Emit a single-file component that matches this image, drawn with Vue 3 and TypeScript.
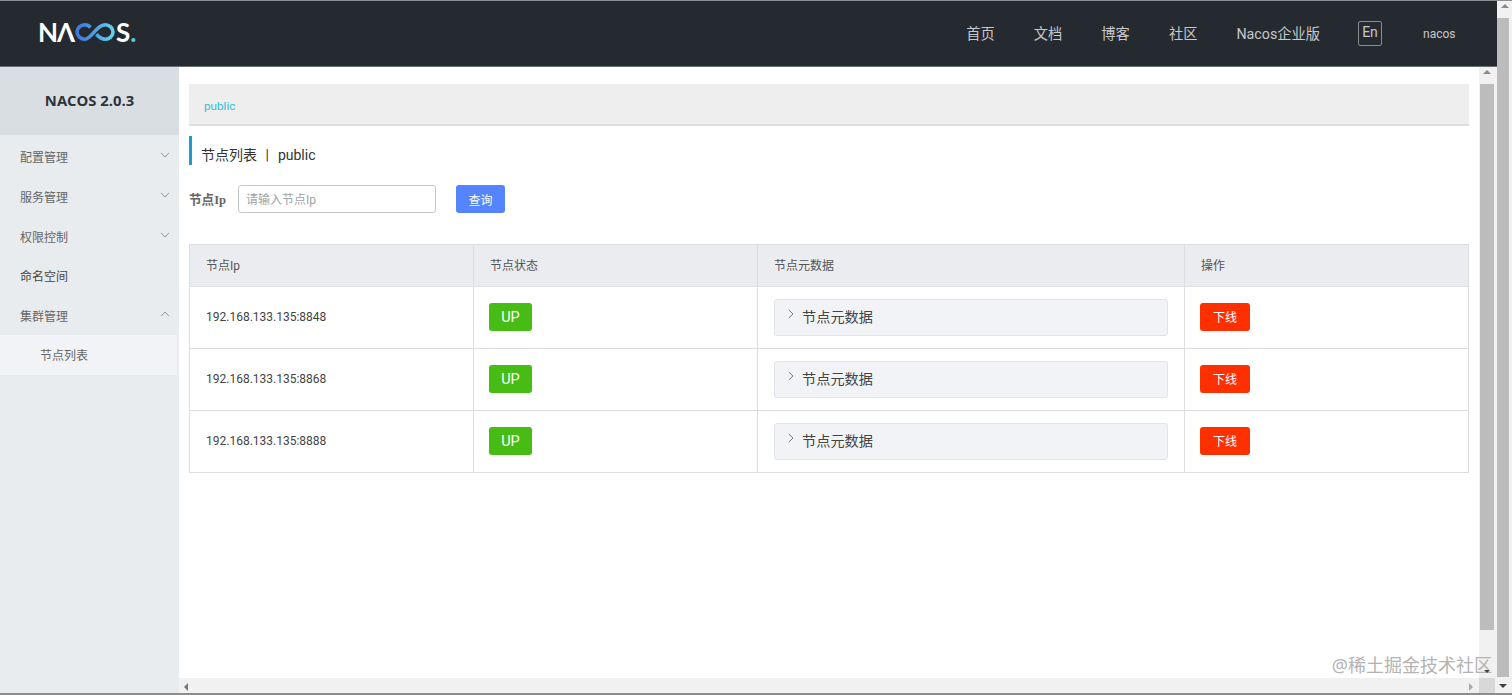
<script setup lang="ts">
const navLinks = ['首页', '文档', '博客', '社区', 'Nacos企业版']

const menu = [
  { label: '配置管理', arrow: 'down' },
  { label: '服务管理', arrow: 'down' },
  { label: '权限控制', arrow: 'down' },
  { label: '命名空间', arrow: '', dark: true },
  { label: '集群管理', arrow: 'up' },
]

const columns = ['节点Ip', '节点状态', '节点元数据', '操作']
const nodes = ['192.168.133.135:8848', '192.168.133.135:8868', '192.168.133.135:8888']
</script>

<template>
  <div class="screen">
    <div class="page">
      <header class="topbar">
        <div class="logo" aria-label="NACOS">
          <span>N</span><span class="logo-a">Λ</span>
          <svg class="logo-loop" width="40" height="18" viewBox="0 0 40 18" fill="none">
            <defs>
              <linearGradient id="loop" x1="0" y1="0" x2="1" y2="0">
                <stop offset="0" stop-color="#3a78e0" />
                <stop offset="0.5" stop-color="#4aa0e8" />
                <stop offset="1" stop-color="#62d2ea" />
              </linearGradient>
            </defs>
            <path
              d="M15.500 4.500C13.900 2.700 11.900 1.800 9.800 1.800 5.600 1.800 2 5 2 9s3.600 7.200 7.800 7.200c7 0 11.400-14.400 20.400-14.400C34.400 1.800 38 5 38 9s-3.600 7.200-7.800 7.200c-3.600 0-6.400-2.300-8.800-5"
              stroke="url(#loop)"
              stroke-width="3.600"
            />
          </svg>
          <span class="logo-s">S</span><span class="logo-dot">.</span>
        </div>
        <nav class="nav">
          <a v-for="link in navLinks" :key="link">{{ link }}</a>
        </nav>
        <span class="lang">En</span>
        <span class="user">nacos</span>
      </header>

      <div class="body">
        <aside class="sidebar">
          <div class="version">NACOS 2.0.3</div>
          <ul class="menu">
            <li v-for="item in menu" :key="item.label" class="menu-item" :class="{ dark: item.dark }">
              {{ item.label }}
              <svg v-if="item.arrow" class="chevron" :class="{ up: item.arrow === 'up' }" width="10" height="6" viewBox="0 0 10 6" fill="none">
                <path d="M1 .8 5 5 9 .8" stroke="#8f979f" />
              </svg>
            </li>
            <li class="submenu-item">节点列表</li>
          </ul>
        </aside>

        <div class="main-wrap">
          <div class="main-row">
            <main class="main">
              <div class="namespace"><a>public</a></div>
              <h1 class="page-title">节点列表<span class="sep">|</span>public</h1>

              <form class="search" @submit.prevent>
                <label class="search-label">节点Ip</label>
                <input class="search-input" type="text" placeholder="请输入节点Ip" />
                <button class="btn btn-query" type="button">查询</button>
              </form>

              <table class="table">
                <colgroup>
                  <col class="col-ip" />
                  <col class="col-state" />
                  <col class="col-meta" />
                  <col />
                </colgroup>
                <thead>
                  <tr>
                    <th v-for="col in columns" :key="col">{{ col }}</th>
                  </tr>
                </thead>
                <tbody>
                  <tr v-for="node in nodes" :key="node">
                    <td class="cell-shift">{{ node }}</td>
                    <td class="cell-shift"><span class="badge">UP</span></td>
                    <td>
                      <div class="collapse">
                        <svg width="6" height="10" viewBox="0 0 6 10" fill="none">
                          <path d="M.8 1 5 5 .8 9" stroke="#777" />
                        </svg>
                        <span>节点元数据</span>
                      </div>
                    </td>
                    <td class="cell-shift"><button class="btn btn-offline" type="button">下线</button></td>
                  </tr>
                </tbody>
              </table>
            </main>

            <div class="vscroll inner">
              <i class="arrow arrow-up"></i>
              <div class="thumb"></div>
            </div>
          </div>

          <div class="hscroll">
            <i class="arrow arrow-left"></i>
            <i class="arrow arrow-right"></i>
            <span class="corner"></span>
          </div>
        </div>
      </div>
    </div>

    <div class="vscroll outer">
      <i class="arrow arrow-up"></i>
      <div class="thumb"></div>
      <i class="arrow arrow-down"></i>
    </div>

    <div class="watermark">@稀土掘金技术社区</div>
    <i class="arrow arrow-small"></i>
  </div>
</template>

<style>
html,
body {
  height: 100%;
  margin: 0;
  overflow: hidden;
  background: #fff;
}
</style>

<style scoped>
.screen {
  position: relative;
  display: flex;
  height: 695px;
  box-sizing: border-box;
  border-top: 1px solid #8b8e91;
  border-bottom: 2px solid #8d8d8d;
  font-family: Roboto, 'Noto Sans CJK SC', sans-serif;
  color: #333;
  overflow: hidden;
}

.page {
  display: flex;
  flex-direction: column;
  width: 1497px;
}

.topbar {
  display: flex;
  align-items: center;
  flex: none;
  height: 65px;
  padding-left: 39px;
  background: #252a31;
  border-bottom: 1px solid #6b6f73;
}

.logo {
  display: flex;
  align-items: center;
  width: 97px;
  margin: -3px 0 0 -1px;
  font-family: Lato, sans-serif;
  font-size: 26px;
  font-weight: 700;
  line-height: 1;
  color: #fff;
}

.logo-a {
  margin-left: -1px;
}

.logo-loop {
  flex: none;
}

.logo-s {
  margin-left: 1px;
}

.logo-dot {
  color: #4ad0df;
}

.nav {
  display: flex;
  gap: 39px;
  margin-left: auto;
  margin-top: -2px;
  font-size: 14.250px;
  color: #c6c8ca;
}

.lang {
  width: 22px;
  height: 23px;
  margin-left: 38px;
  border: 1px solid #8a8d90;
  border-radius: 2px;
  font-size: 14px;
  line-height: 20px;
  text-align: center;
  color: #c6c8ca;
}

.user {
  width: 33px;
  margin: 0 41px 0 41px;
  font-size: 12px;
  color: #c6c8ca;
}

.body {
  display: flex;
  flex: 1;
  min-height: 0;
}

.sidebar {
  flex: none;
  width: 179px;
  background: #e9ecef;
}

.version {
  height: 68px;
  background: #d9dee2;
  font-family: 'Open Sans', sans-serif;
  font-size: 14.800px;
  font-weight: 700;
  line-height: 67px;
  text-align: center;
  color: #2b333b;
}

.menu {
  margin: 0;
  padding: 3.300px 0 0;
  list-style: none;
}

.menu-item {
  position: relative;
  height: 39.700px;
  padding-left: 20px;
  font-size: 12px;
  line-height: 41.500px;
  color: #666;
}

.menu-item.dark {
  color: #444;
}

.chevron {
  position: absolute;
  top: 14px;
  right: 9px;
}

.chevron.up {
  transform: rotate(180deg);
}

.submenu-item {
  width: 177px;
  height: 40px;
  margin-top: -2px;
  padding-left: 40px;
  box-sizing: border-box;
  background: #f1f3f6;
  font-size: 12px;
  line-height: 43px;
  color: #666;
}

.main-wrap {
  display: flex;
  flex: 1;
  flex-direction: column;
  min-width: 0;
}

.main-row {
  display: flex;
  flex: 1;
  min-height: 0;
}

.main {
  flex: 1;
  min-width: 0;
  padding: 17px 10px 0;
}

.namespace {
  height: 40px;
  padding-left: 15px;
  background: #eee;
  border-bottom: 2px solid #ddd;
  font-size: 11.700px;
  line-height: 44px;
  color: #36bcd6;
}

.page-title {
  height: 29px;
  margin: 10px 0 0;
  padding-left: 9px;
  border-left: 3px solid #209bc7;
  font-size: 14px;
  font-weight: 400;
  line-height: 38px;
  color: #333;
}

.sep {
  margin: 0 9px 0 8.500px;
}

.search {
  display: flex;
  align-items: center;
  height: 28px;
  margin-top: 20px;
}

.search-label {
  width: 49px;
  margin-top: -2px;
  font-family: 'Liberation Serif', 'Noto Sans CJK SC', serif;
  font-size: 12.600px;
  font-weight: 700;
  color: #666;
}

.search-input {
  width: 198px;
  height: 28px;
  padding: 2px 7px 0;
  box-sizing: border-box;
  border: 1px solid #c4c6cf;
  border-radius: 3px;
  outline: none;
  font-family: inherit;
  font-size: 12px;
}

.search-input::placeholder {
  color: #a0a3a8;
}

.btn {
  height: 28px;
  padding: 0;
  border: 0;
  border-radius: 3px;
  font-family: inherit;
  font-size: 12px;
  color: #fff;
}

.btn-query {
  width: 49px;
  margin-left: 20px;
  background: #5584ff;
}

.btn-offline {
  display: block;
  width: 50px;
  margin-left: -1px;
  background: #ff3000;
}

.table {
  width: 1280px;
  margin-top: 31px;
  table-layout: fixed;
  border-collapse: collapse;
  font-size: 12px;
}

.col-ip,
.col-state {
  width: 284px;
}

.col-meta {
  width: 427px;
}

.table th,
.table td {
  padding: 0 16px;
  border: 1px solid #dcdee3;
  text-align: left;
}

.table th {
  height: 42px;
  padding-bottom: 2px;
  box-sizing: border-box;
  background: #ebecf0;
  font-weight: 400;
  color: #555;
}

.table td {
  height: 61px;
  color: #444;
}

.table td.cell-shift {
  padding-bottom: 2px;
  box-sizing: border-box;
  height: 62px;
}

.badge {
  display: block;
  width: 43px;
  height: 28px;
  margin-left: -1px;
  border-radius: 3px;
  background: #46bc15;
  font-size: 14.500px;
  line-height: 30px;
  text-align: center;
  color: #fff;
}

.collapse {
  display: flex;
  align-items: center;
  gap: 8px;
  height: 37px;
  padding: 0 0 4px 13px;
  box-sizing: border-box;
  border: 1px solid #e2e4e9;
  border-radius: 3px;
  background: #f2f3f7;
  font-size: 14.200px;
  color: #444;
}

.collapse svg {
  margin-top: -3px;
}

.vscroll {
  position: relative;
  flex: none;
  background: #f1f1f1;
}

.vscroll.inner {
  width: 18px;
}

.vscroll.outer {
  width: 15px;
}

.thumb {
  position: absolute;
  background: #bcbcbc;
}

.inner .thumb {
  top: 17px;
  right: 3px;
  bottom: 48px;
  left: 1px;
}

.outer .thumb {
  top: 17px;
  right: 3px;
  bottom: 16px;
  left: 0;
}

.arrow {
  position: absolute;
  width: 0;
  height: 0;
  border: 4px solid transparent;
}

.arrow-up {
  top: 3px;
  left: 4px;
  border-top: 0;
  border-bottom-color: #8a8a8a;
}

.arrow-down {
  bottom: 5px;
  left: 2px;
  border-bottom: 0;
  border-top-color: #404040;
}

.hscroll {
  position: relative;
  flex: none;
  height: 15px;
  background: #f1f1f1;
}

.corner {
  position: absolute;
  top: 0;
  right: 2px;
  bottom: 0;
  width: 16px;
  background: #d8d8d8;
}

.arrow-left {
  top: 5px;
  left: 5px;
  border-left: 0;
  border-right-color: #777;
}

.arrow-right {
  top: 5px;
  right: 24px;
  border-right: 0;
  border-left-color: #aaa;
}

.watermark {
  position: absolute;
  right: 20px;
  bottom: 17px;
  font-family: 'Noto Sans', 'Noto Sans CJK SC', sans-serif;
  font-size: 18px;
  line-height: 22px;
  color: #b3b3b3;
}

.arrow-small {
  right: 22px;
  bottom: 20px;
  border-width: 3px;
  border-bottom: 0;
  border-top-color: #444;
}
</style>
